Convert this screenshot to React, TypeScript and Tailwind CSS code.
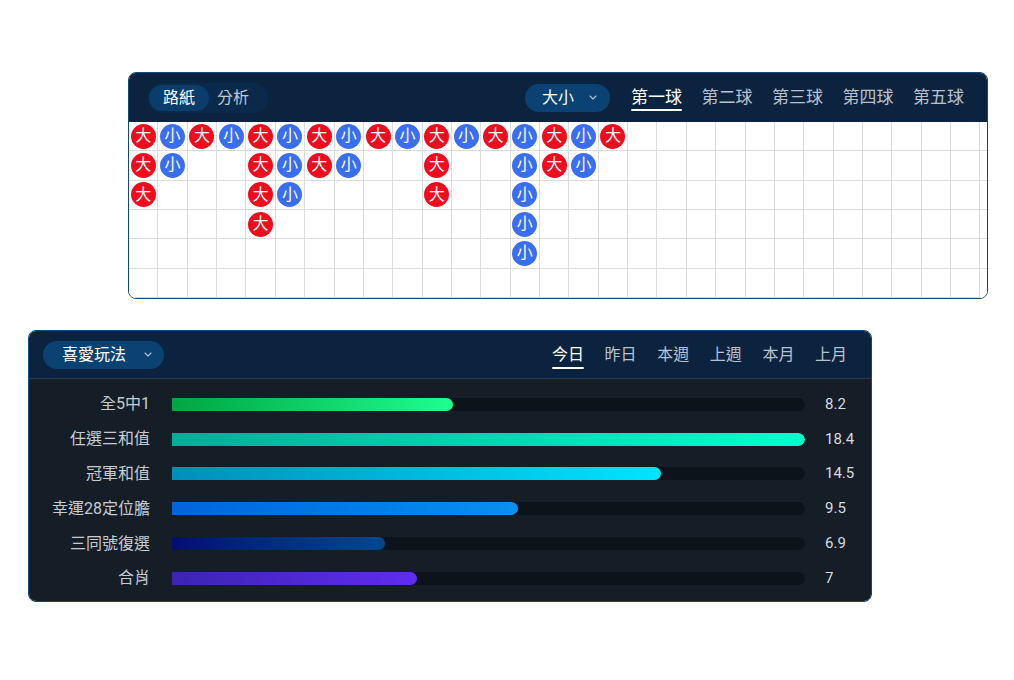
import React from "react";

const cols: string[][] = [
  ["大", "大", "大"],
  ["小", "小"],
  ["大"],
  ["小"],
  ["大", "大", "大", "大"],
  ["小", "小", "小"],
  ["大", "大"],
  ["小", "小"],
  ["大"],
  ["小"],
  ["大", "大", "大"],
  ["小"],
  ["大"],
  ["小", "小", "小", "小", "小"],
  ["大", "大"],
  ["小", "小"],
  ["大"],
];

const bars = [
  { label: "全5中1", value: "8.2", pct: 44.4, grad: "bg-gradient-to-r from-[#00a640] to-[#1dff8f]" },
  { label: "任選三和值", value: "18.4", pct: 100, grad: "bg-gradient-to-r from-[#00ae98] to-[#00ffcc]" },
  { label: "冠軍和值", value: "14.5", pct: 77.2, grad: "bg-gradient-to-r from-[#008fbb] to-[#00e5ff]" },
  { label: "幸運28定位膽", value: "9.5", pct: 54.7, grad: "bg-gradient-to-r from-[#0064de] to-[#0a90f0]" },
  { label: "三同號復選", value: "6.9", pct: 33.6, grad: "bg-gradient-to-r from-[#060c70] to-[#00488b]" },
  { label: "合肖", value: "7", pct: 38.7, grad: "bg-gradient-to-r from-[#3c24b3] to-[#602cf0]" },
];

function Chevron() {
  return (
    <svg width="8" height="5" viewBox="0 0 8 5" fill="none">
      <path d="M1 1l3 3 3-3" stroke="#b4c3d3" strokeWidth="1.1" strokeLinecap="round" strokeLinejoin="round" />
    </svg>
  );
}

function Ball({ v }: { v: string }) {
  const red = v === "大";
  return (
    <div
      className={`w-[25px] h-[25px] rounded-full flex items-center justify-center text-white text-[16px] leading-none ${
        red ? "bg-[#f20a1d]" : "bg-[#3a6ef2]"
      }`}
    >
      {v}
    </div>
  );
}

export default function App() {
  const totalCols = 30;
  return (
    <div className="w-[1014px] h-[680px] bg-white font-['Roboto','Noto_Sans_CJK_TC',sans-serif] pt-[72px] flex flex-col">
      {/* Top card */}
      <div className="ml-[128px] w-[860px] h-[227px] rounded-lg border border-[#0b4a7d] overflow-hidden flex flex-col">
        <div className="h-[49px] shrink-0 bg-[#0c2340] flex items-center pl-[19px] pr-[23px]">
          <div className="h-[30px] rounded-full bg-[#0b2a4b] flex items-center p-px">
            <div className="h-[26px] px-[14px] rounded-full bg-[#0a3d6c] flex items-center text-white text-[16px] leading-none">
              路紙
            </div>
            <div className="h-[26px] pl-[8px] pr-[18px] flex items-center text-[#c2c9d2] text-[16px] leading-none">
              分析
            </div>
          </div>
          <div className="ml-auto h-[28px] rounded-full bg-[#0a4273] flex items-center pl-[17px] pr-[13px] gap-[15px] text-white text-[16px] leading-none">
            <span>大小</span>
            <Chevron />
          </div>
          <div className="ml-[21px] flex items-center gap-[19.5px] text-[17px] leading-none">
            {["第一球", "第二球", "第三球", "第四球", "第五球"].map((t, i) => (
              <div key={t} className="relative">
                <span className={i === 0 ? "text-white" : "text-[#b9c1cc]"}>{t}</span>
                {i === 0 && <div className="absolute left-0 right-0 -bottom-[5px] h-[2px] bg-white rounded" />}
              </div>
            ))}
          </div>
        </div>
        <div className="flex-1 bg-white flex overflow-hidden">
          {Array.from({ length: totalCols }).map((_, c) => (
            <div key={c} className="flex flex-col shrink-0">
              {Array.from({ length: 6 }).map((__, r) => {
                const v = cols[c]?.[r];
                return (
                  <div
                    key={r}
                    className="w-[29.37px] h-[29.37px] border-r border-b border-[#dcdcdc] flex items-center justify-center"
                  >
                    {v && <Ball v={v} />}
                  </div>
                );
              })}
            </div>
          ))}
        </div>
      </div>

      {/* Bottom card */}
      <div className="mt-[31px] ml-[28px] w-[844px] h-[272px] rounded-lg border border-[#0b4a7d] overflow-hidden flex flex-col">
        <div className="h-[48px] shrink-0 bg-[#0c2340] border-b border-[#283a4f] flex items-center pl-[14px] pr-[24px]">
          <div className="h-[28px] rounded-full bg-[#0a4273] flex items-center pl-[19px] pr-[12px] gap-[18px] text-white text-[16px] leading-none">
            <span>喜愛玩法</span>
            <Chevron />
          </div>
          <div className="ml-auto flex items-center gap-[20.6px] text-[16px] leading-none">
            {["今日", "昨日", "本週", "上週", "本月", "上月"].map((t, i) => (
              <div key={t} className="relative">
                <span className={i === 0 ? "text-white" : "text-[#b9c1cc]"}>{t}</span>
                {i === 0 && <div className="absolute left-0 right-0 -bottom-[6px] h-[2px] bg-white rounded" />}
              </div>
            ))}
          </div>
        </div>
        <div className="flex-1 bg-[#151d27] pt-[8px] flex flex-col">
          {bars.map((b) => (
            <div key={b.label} className="h-[34.8px] flex items-center">
              <div className="w-[121px] text-right text-[16px] leading-none text-[#c7ccd3]">{b.label}</div>
              <div className="ml-[22px] w-[633px] h-[13px] bg-[#0d131b] rounded-r-full overflow-hidden">
                <div className={`h-full rounded-r-full ${b.grad}`} style={{ width: `${b.pct}%` }} />
              </div>
              <div className="ml-[20px] text-[15px] leading-none text-[#d6dbe1]">{b.value}</div>
            </div>
          ))}
        </div>
      </div>
    </div>
  );
}
